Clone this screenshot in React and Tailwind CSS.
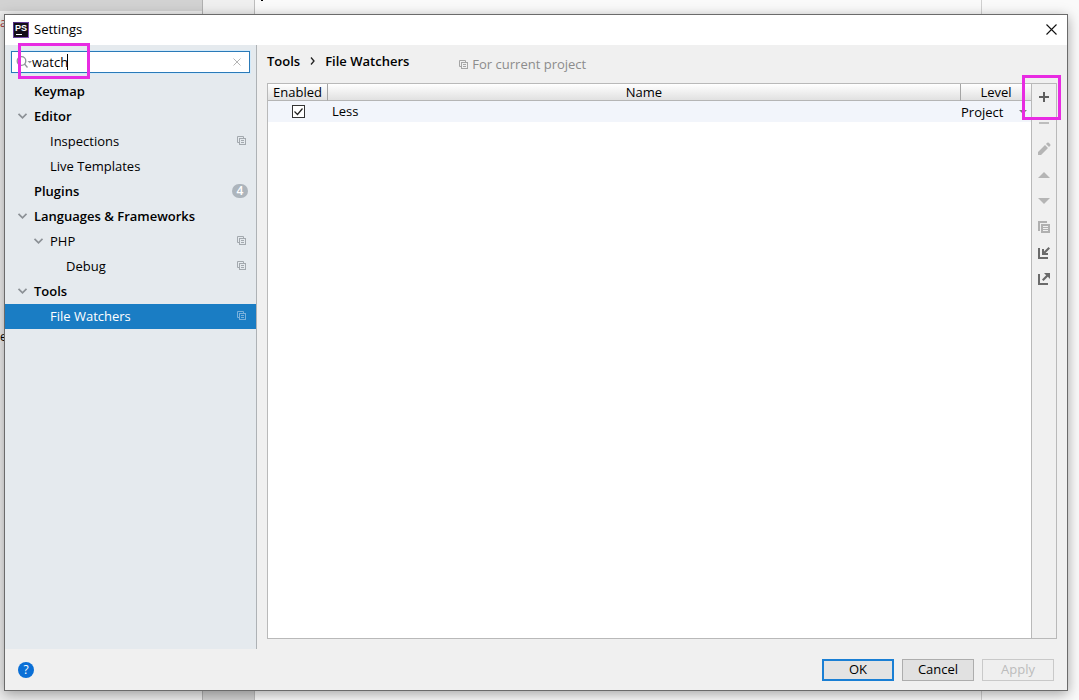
import React, { useState } from "react";
import clsx from "clsx";

const TREE = [
  { label: "Keymap", level: 0 },
  { label: "Editor", level: 0, open: true },
  { label: "Inspections", level: 1, project: true },
  { label: "Live Templates", level: 1 },
  { label: "Plugins", level: 0, count: 4 },
  { label: "Languages & Frameworks", level: 0, open: true },
  { label: "PHP", level: 1, open: true, project: true },
  { label: "Debug", level: 2, project: true },
  { label: "Tools", level: 0, open: true },
  { label: "File Watchers", level: 1, project: true },
];

const INDENT = ["pl-3", "pl-7", "pl-11"];

const ProjectIcon = ({ className }) => (
  <svg viewBox="0 0 9 9" className={clsx("h-[9px] w-[9px] shrink-0", className)} fill="none" stroke="currentColor" aria-hidden="true">
    <path d="M2 6.5H.5v-6h6V2" />
    <rect x="2.5" y="2.5" width="6" height="6" />
    <path d="M4 4.5h3M4 6.5h3" />
  </svg>
);

const Chevron = () => (
  <svg viewBox="0 0 10 6" className="h-[6px] w-[10px]" fill="none" stroke="#8c9196" strokeWidth="1.7" aria-hidden="true">
    <path d="M1.5.8l4 4 4-4" />
  </svg>
);

const AppLogo = () => (
  <svg viewBox="0 0 16 16" className="h-4 w-4" aria-hidden="true">
    <defs>
      <linearGradient id="logo-edge" x1="0" y1="0" x2="1" y2="1">
        <stop offset="0" stopColor="#4b2a7c" />
        <stop offset="1" stopColor="#8a5ac4" />
      </linearGradient>
    </defs>
    <rect width="16" height="16" fill="url(#logo-edge)" />
    <rect x="1" y="1" width="14" height="14" fill="#130d18" />
    <text x="2" y="9" fontFamily="Liberation Sans, sans-serif" fontSize="9" fontWeight="700" fill="#fff">PS</text>
    <rect x="3" y="12" width="6" height="1" fill="#fff" />
  </svg>
);

const TOOLS = [
  {
    name: "Add",
    color: "text-[#5f5f5f]",
    icon: <path d="M7 3h2v4h4v2H9v4H7V9H3V7h4z" />,
  },
  { name: "Remove", color: "text-[#bdbdbd]", icon: <path d="M3 7h10v2H3z" /> },
  {
    name: "Edit",
    color: "text-[#b5b5b5]",
    icon: <path d="M2 14v-3l7-7 3 3-7 7zM10 3l1.2-1.2q.8-.8 1.6 0l1.4 1.4q.8.8 0 1.6L13 6z" />,
  },
  { name: "Move up", color: "text-[#b5b5b5]", icon: <path d="M8 5l6 6H2z" /> },
  { name: "Move down", color: "text-[#b5b5b5]", icon: <path d="M8 11L2 5h12z" /> },
  {
    name: "Copy",
    color: "text-[#b0b0b0]",
    icon: (
      <>
        <path d="M2 2h9v2H4v8H2z" />
        <path fillRule="evenodd" d="M5 5h9v9H5zM7 7h5v1H7zM7 9h5v1H7zM7 11h5v1H7z" />
      </>
    ),
  },
  {
    name: "Import",
    color: "text-[#6a6a6a]",
    icon: <path d="M2 3h2v9h8v2H2zM6 4h2v2.500L12.500 2 14 3.500 9.500 8H12v2H6z" />,
  },
  {
    name: "Export",
    color: "text-[#6a6a6a]",
    icon: <path d="M2 3h2v9h8v2H2zM8 2h6v6l-2.200-2.200L7.500 10 6 8.500l4.200-4.300z" />,
  },
];

// Editor window that shows around the dialog
const Backdrop = () => (
  <div className="absolute inset-0 flex overflow-hidden text-xs text-[#a33]" aria-hidden="true">
    <div className="relative flex w-[203px] flex-col border-r border-[#b0b0b0] bg-[#ededed]">
      <div className="h-[11px] bg-[#d2d2d2]" />
      <span className="mt-1 h-4 leading-4">a</span>
      <span className="mt-[298px] h-4 leading-4 text-black">e</span>
    </div>
    <div className="flex w-[52px] flex-col border-r border-[#bdbdbd]">
      <div className="flex-1 bg-[#efefef]" />
      <div className="h-[50px] bg-[#d2d2d2]" />
    </div>
    <div className="flex-1 bg-[#fafafa]">
      <div className="ml-[6px] h-px w-[2px] bg-black" />
    </div>
    <div className="w-[98px] border-l border-[#d0d0d0] bg-[#fafafa]" />
  </div>
);

const SearchBox = ({ value, onChange }) => (
  <div className="relative mx-[6px] mt-[6px] flex h-[22px] items-center border border-[#2a7ab8] bg-white shadow-[0_0_0_1px_#d3eafa]">
    <svg viewBox="0 0 16 14" className="ml-1 h-[14px] w-4 shrink-0" fill="none" stroke="#8f9499" strokeWidth="1.3" aria-hidden="true">
      <circle cx="5.500" cy="6" r="4.300" />
      <path d="M8.500 9l3 3.500" />
      <path d="M11.500 6h4.500l-2.200 2.200z" fill="#8f9499" stroke="none" />
    </svg>
    <input
      aria-label="Search settings"
      className="h-5 w-full min-w-0 flex-1 bg-transparent text-[13px] text-black outline-none"
      value={value}
      onChange={onChange}
    />
    <span className="absolute left-[55px] top-[2px] h-4 w-px bg-black" />
    <button className="mr-2 text-[#b5b5b5]" aria-label="Clear">
      <svg viewBox="0 0 8 8" className="h-2 w-2" fill="none" stroke="currentColor">
        <path d="M.5.5l7 7M7.500.5l-7 7" />
      </svg>
    </button>
    <div className="pointer-events-none absolute left-[6px] -top-[9px] h-9 w-[72px] border-[3px] border-[#e82be2]" />
  </div>
);

const TreeRow = ({ item, selected, onSelect }) => (
  <li>
    <button
      onClick={onSelect}
      className={clsx(
        "flex h-[25px] w-full items-center pb-[2px] pr-[10px] text-left leading-5",
        INDENT[item.level],
        item.level === 0 && "font-semibold",
        selected ? "bg-[#1a7dc4] text-white" : "text-black"
      )}
    >
      <span className="flex w-[17px] shrink-0">{item.open && <Chevron />}</span>
      <span className="flex-1">{item.label}</span>
      {item.project && <ProjectIcon className={selected ? "text-[#79b1dc]" : "text-[#a3a9ae]"} />}
      {item.count && (
        <span className="-mr-[2px] flex h-[14px] w-4 items-center justify-center rounded-full bg-[#adb5bc] text-xs leading-none text-white">
          {item.count}
        </span>
      )}
    </button>
  </li>
);

const WatchersTable = () => {
  const [enabled, setEnabled] = useState(true);

  return (
    <div className="flex-1 bg-white">
      <table className="w-full table-fixed border-separate border-spacing-0">
        <thead>
          <tr className="h-[17px] bg-linear-to-b from-white to-[#dfdfdf] leading-4">
            <th className="w-[60px] border-b border-r border-b-[#b5b5b5] border-r-[#a5a5a5] p-0 font-normal">Enabled</th>
            <th className="border-b border-[#b5b5b5] p-0 font-normal">Name</th>
            <th className="w-[71px] border-b border-l border-b-[#b5b5b5] border-l-[#a5a5a5] p-0 font-normal">Level</th>
          </tr>
        </thead>
        <tbody>
          <tr className="h-[21px] bg-[#f2f5fb]">
            <td className="p-0">
              <div className="relative mx-auto h-[13px] w-[13px]">
                <input
                  type="checkbox"
                  aria-label="Enable Less"
                  checked={enabled}
                  onChange={() => setEnabled(!enabled)}
                  className="block h-[13px] w-[13px] appearance-none border border-[#333] bg-white"
                />
                {enabled && (
                  <svg viewBox="0 0 13 13" className="pointer-events-none absolute inset-0" fill="none" stroke="#222" strokeWidth="1.2">
                    <path d="M2.500 6.500l3 3 5-6" />
                  </svg>
                )}
              </div>
            </td>
            <td className="p-0 pl-1">Less</td>
            <td className="p-0">
              <div className="relative flex items-center">
                <select aria-label="Level" className="h-[19px] w-full appearance-none bg-transparent pl-px leading-[18px] outline-none">
                  <option>Project</option>
                  <option>Global</option>
                </select>
                <svg viewBox="0 0 8 4" className="pointer-events-none absolute right-1 h-1 w-2" fill="#7d7d7d">
                  <path d="M0 0h8L4 4z" />
                </svg>
              </div>
            </td>
          </tr>
        </tbody>
      </table>
    </div>
  );
};

const Toolbar = () => (
  <div className="relative flex w-[25px] flex-col border-l border-[#b9b9b9] bg-[#f0f0f0]">
    {TOOLS.map((tool) => (
      <button key={tool.name} aria-label={tool.name} className={clsx("flex h-[26px] items-center justify-center", tool.color)}>
        <svg viewBox="0 0 16 16" className="h-4 w-4" fill="currentColor">
          {tool.icon}
        </svg>
      </button>
    ))}
    <div className="pointer-events-none absolute -left-[10px] -top-[9px] h-[45px] w-[39px] border-[3px] border-[#e82be2]" />
  </div>
);

const App = () => {
  const [query, setQuery] = useState("watch");
  const [selected, setSelected] = useState("File Watchers");

  return (
    <div className="relative flex h-screen pb-[9px] pl-1 pr-[11px] pt-[14px] font-['Open_Sans','Noto_Sans',sans-serif] text-[13px] text-black">
      <Backdrop />

      <div className="relative flex flex-1 flex-col border border-[#6b6b6b] bg-[#f0f0f0] shadow-[0_3px_12px_rgba(0,0,0,0.35)]">
        <header className="flex h-[30px] items-center bg-white pb-px pl-2 pr-[10px]">
          <AppLogo />
          <h1 className="ml-[5px] flex-1">Settings</h1>
          <button aria-label="Close">
            <svg viewBox="0 0 11 11" className="h-[11px] w-[11px]" fill="none" stroke="#111" strokeWidth="1.100">
              <path d="M.5.5l10 10M10.500.5l-10 10" />
            </svg>
          </button>
        </header>

        <div className="flex min-h-0 flex-1">
          <aside className="w-[252px] shrink-0 border-r border-[#aeb2b5] bg-[#e5eaee]">
            <SearchBox value={query} onChange={(e) => setQuery(e.target.value)} />
            <ul className="mt-[6px]">
              {TREE.map((item) => (
                <TreeRow
                  key={item.label}
                  item={item}
                  selected={item.label === selected}
                  onSelect={() => setSelected(item.label)}
                />
              ))}
            </ul>
          </aside>

          <main className="flex flex-1 flex-col px-[10px] pb-[10px]">
            <div className="flex h-[38px] items-start pt-[6px]">
              <nav className="flex items-center font-semibold leading-5">
                <a href="#tools">Tools</a>
                <svg viewBox="0 0 5 8" className="mx-[10px] h-2 w-[5px]" fill="none" stroke="#222" strokeWidth="1.300">
                  <path d="M1 .5L4 4 1 7.500" />
                </svg>
                <a href="#file-watchers">File Watchers</a>
              </nav>
              <p className="ml-[50px] mt-[3px] flex items-center gap-1 leading-5 text-[#8c8c8c]">
                <ProjectIcon className="text-[#a5a5a5]" />
                For current project
              </p>
            </div>
            <div className="flex flex-1 border border-[#b9b9b9]">
              <WatchersTable />
              <Toolbar />
            </div>
          </main>
        </div>

        <footer className="flex h-[41px] items-center gap-2 px-[13px]">
          <button aria-label="Help" className="mr-auto flex h-4 w-4 items-center justify-center rounded-full bg-[#0a6fd6] text-xs leading-none text-white">
            ?
          </button>
          <button className="h-[22px] w-[72px] border-2 border-[#1a7fd4] bg-[#e3e3e3] pb-px leading-4">OK</button>
          <button className="h-[22px] w-[72px] border border-[#adadad] bg-[#e1e1e1] pb-px leading-4">Cancel</button>
          <button disabled className="h-[22px] w-[72px] border border-[#c9c9c9] bg-[#efefef] pb-px leading-4 text-[#bcbcbc]">
            Apply
          </button>
        </footer>
      </div>
    </div>
  );
};

export default App;
